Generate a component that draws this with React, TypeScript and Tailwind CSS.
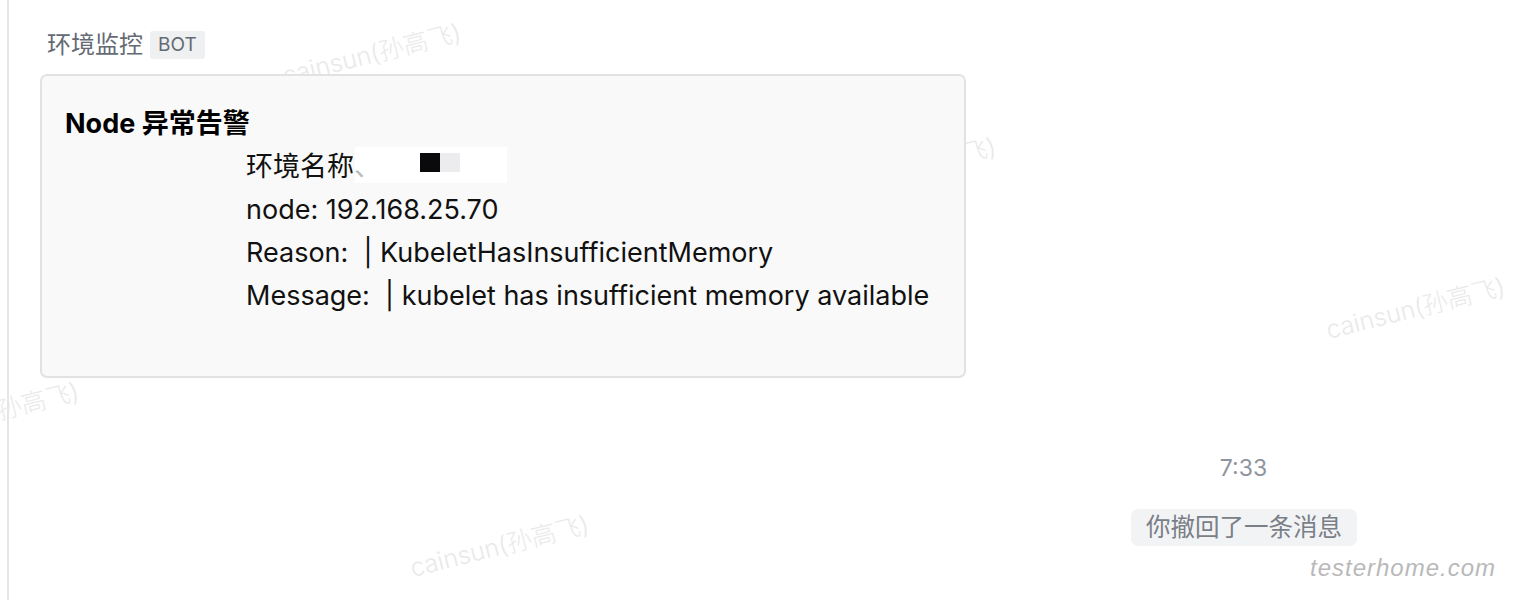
const latin = "font-['Inter','Noto_Sans_CJK_SC',sans-serif]";

function Watermark({ className }: { className: string }) {
  return (
    <div
      className={`pointer-events-none absolute -rotate-[14deg] whitespace-nowrap text-[25px] font-light text-[#e9e9e9] ${className}`}
    >
      cainsun(孙高飞)
    </div>
  );
}

export default function App() {
  return (
    <div className={`relative h-[600px] w-[1518px] overflow-hidden bg-white ${latin}`}>
      <Watermark className="left-[280px] top-[36px]" />
      <Watermark className="left-[815px] top-[150px]" />
      <Watermark className="left-[1324px] top-[290px]" />
      <Watermark className="left-[-102px] top-[395px]" />
      <Watermark className="left-[408px] top-[528px]" />

      <div className="relative flex h-full">
        <div className="ml-[7px] w-[2px] bg-[#e6e6e6]" />
        <div className="flex flex-1 flex-col pl-[31px] pt-[30px]">
          <div className="flex items-center gap-[7px] pl-[7px]">
            <span className="text-[24px] leading-[30px] text-[#646a73]">环境监控</span>
            <span className="rounded-[3px] bg-[#eff0f1] px-[8px] text-[19px] leading-[28px] text-[#646a73]">
              BOT
            </span>
          </div>
          <div className="mt-[14px] h-[304px] w-[926px] rounded-[7px] border-2 border-[#e2e2e2] bg-[#f9f9f9] pl-[23px] pt-[26px]">
            <div className="text-[27px] font-bold leading-[43px] text-black">Node 异常告警</div>
            <div className="pl-[181px] text-[27px] leading-[43px] text-[#111]">
              <div className="relative">
                <div className="absolute left-[109px] top-[2px] flex h-[36px] w-[152px] items-start bg-white pt-[6px]">
                  <span className="ml-[65px] h-[19px] w-[20px] bg-[#0a0a0c]" />
                  <span className="h-[19px] w-[20px] bg-[#ececee]" />
                </div>
                <span className="relative">环境名称</span>
                <span className="relative text-[#bbb]">、</span>
              </div>
              <div>node: 192.168.25.70</div>
              <div>Reason:&nbsp; | KubeletHasInsufficientMemory</div>
              <div>Message:&nbsp; | kubelet has insufficient memory available</div>
            </div>
          </div>
          <div className="mt-[75px] flex w-[1316px] justify-end">
            <div className="w-[225px] text-center text-[23px] leading-[30px] text-[#8f959e]">7:33</div>
          </div>
          <div className="mt-[26px] flex w-[1317px] justify-end">
            <div className="rounded-[7px] bg-[#f2f3f5] px-[15px] text-[24.5px] leading-[37px] text-[#7a7f87]">
              你撤回了一条消息
            </div>
          </div>
        </div>
      </div>

      <div className="pointer-events-none absolute left-[1310px] top-[550px] whitespace-nowrap font-['Liberation_Sans'] text-[24px] font-light italic tracking-[1px] text-[#b9b9b9]">
        testerhome.com
      </div>
    </div>
  );
}
